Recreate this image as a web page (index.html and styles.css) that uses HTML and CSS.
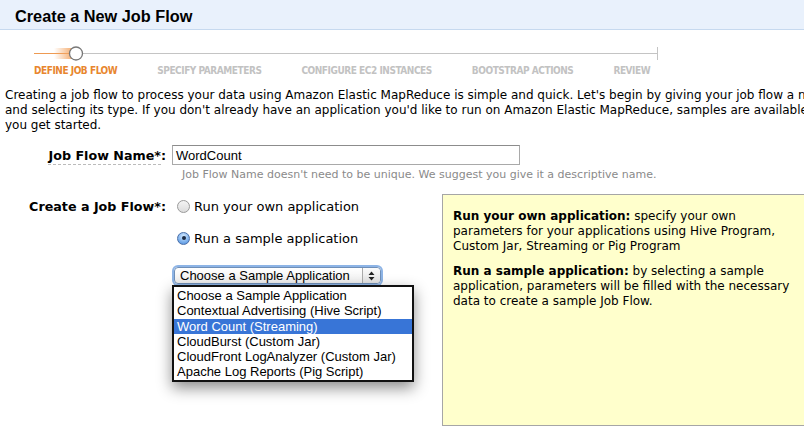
FILE: index.html
```html
<!DOCTYPE html>
<html>
<head>
<meta charset="utf-8">
<link rel="stylesheet" href="styles.css">
</head>
<body>
<div class="page">
  <div class="header"><h1>Create a New Job Flow</h1></div>

  <div class="steps">
    <svg class="track" width="630" height="16" viewBox="0 0 630 16">
      <defs>
        <linearGradient id="glow" x1="0" x2="1" y1="0" y2="0">
          <stop offset="0" stop-color="#f4a664" stop-opacity="0"/>
          <stop offset="1" stop-color="#f4a664" stop-opacity="0.9"/>
        </linearGradient>
      </defs>
      <line x1="0" y1="7.5" x2="36" y2="7.5" stroke="#ee9a52" stroke-width="1"/>
      <rect x="20" y="2" width="18" height="11" fill="url(#glow)"/>
      <line x1="48" y1="7.5" x2="623" y2="7.5" stroke="#c4c4c4" stroke-width="1"/>
      <line x1="623.5" y1="1" x2="623.5" y2="14" stroke="#c4c4c4" stroke-width="1"/>
      <circle cx="42" cy="7.5" r="6.5" fill="#fff" stroke="#777" stroke-width="1.3"/>
    </svg>
    <div class="step-labels">
      <span class="step active">DEFINE JOB FLOW</span>
      <span class="step">SPECIFY PARAMETERS</span>
      <span class="step">CONFIGURE EC2 INSTANCES</span>
      <span class="step">BOOTSTRAP ACTIONS</span>
      <span class="step">REVIEW</span>
    </div>
  </div>

  <p class="intro">Creating a job flow to process your data using Amazon Elastic MapReduce is simple and quick. Let's begin by giving your job flow a name<br>and selecting its type. If you don't already have an application you'd like to run on Amazon Elastic MapReduce, samples are available to help<br>you get started.</p>

  <div class="row name-row">
    <div class="label"><span class="dotted">Job Flow Name*</span>:</div>
    <div class="field">
      <div class="textbox">WordCount</div>
      <div class="hint">Job Flow Name doesn't need to be unique. We suggest you give it a descriptive name.</div>
    </div>
  </div>

  <div class="row type-row">
    <div class="label">Create a Job Flow*:</div>
    <div class="choices">
      <div class="radio-line"><span class="radio"></span>Run your own application</div>
      <div class="radio-line"><span class="radio checked"></span>Run a sample application</div>
      <div class="select-wrap">
        <div class="select">
          <span class="select-text">Choose a Sample Application</span>
          <span class="select-btn">
            <svg width="7" height="10" viewBox="0 0 7 10"><path d="M3.5 0.5 L6.5 4 H0.5 Z M3.5 9.5 L6.5 6 H0.5 Z" fill="#222"/></svg>
          </span>
        </div>
        <ul class="menu">
          <li>Choose a Sample Application</li>
          <li>Contextual Advertising (Hive Script)</li>
          <li class="sel">Word Count (Streaming)</li>
          <li>CloudBurst (Custom Jar)</li>
          <li>CloudFront LogAnalyzer (Custom Jar)</li>
          <li>Apache Log Reports (Pig Script)</li>
        </ul>
      </div>
    </div>
    <div class="infobox">
      <p><b>Run your own application:</b> specify your own<br>parameters for your applications using Hive Program,<br>Custom Jar, Streaming or Pig Program</p>
      <p><b>Run a sample application:</b> by selecting a sample<br>application, parameters will be filled with the necessary<br>data to create a sample Job Flow.</p>
    </div>
  </div>
</div>
</body>
</html>
```

FILE: styles.css
```css
html, body {
  margin: 0;
  padding: 0;
}
body {
  width: 804px;
  height: 434px;
  overflow: hidden;
  background: #fff;
  color: #000;
  font-family: "DejaVu Sans", Verdana, sans-serif;
  font-size: 12px;
}
.page {
  width: 1000px;
}
.header {
  height: 29px;
  background: #e9f1fc;
  border-bottom: 1px solid #c6d9ef;
}
.header h1 {
  margin: 0;
  padding-left: 15px;
  font-family: "Liberation Sans", Arial, sans-serif;
  font-size: 16.3px;
  font-weight: bold;
  line-height: 33px;
}
.steps {
  padding: 16px 0 0 34px;
}
.track {
  display: block;
}
.step-labels {
  display: flex;
  gap: 40px;
  margin-top: 2px;
}
.step {
  font-family: "DejaVu Sans Condensed", "DejaVu Sans", sans-serif;
  font-stretch: condensed;
  font-weight: bold;
  font-size: 10px;
  letter-spacing: -0.45px;
  color: #c2c2c2;
  line-height: 13px;
}
.step.active {
  color: #e8862e;
}
.intro {
  margin: 11px 0 0 5px;
  line-height: 15px;
  white-space: nowrap;
}
.row {
  display: flex;
}
.label {
  width: 166px;
  text-align: right;
  font-weight: bold;
  font-size: 12.7px;
  flex: none;
}
.name-row {
  margin-top: 12px;
}
.name-row .label {
  padding-top: 3px;
}
.dotted {
  border-bottom: 1px dashed #bbb;
  padding-bottom: 1px;
}
.field {
  padding-left: 6px;
}
.textbox {
  width: 343px;
  height: 18px;
  border: 1px solid #a9a9a9;
  border-top-color: #8c8c8c;
  font-family: "Liberation Sans", Arial, sans-serif;
  font-size: 13px;
  line-height: 19px;
  padding-left: 3px;
}
.hint {
  margin: 3px 0 0 10px;
  font-size: 11px;
  color: #8a8a8a;
  line-height: 14px;
}
.type-row {
  margin-top: 14px;
}
.type-row .label {
  padding-top: 3px;
}
.choices {
  width: 265px;
  flex: none;
  padding-left: 11px;
}
.radio-line {
  display: flex;
  align-items: center;
  font-size: 13px;
  height: 20px;
  margin-bottom: 12px;
}
.radio {
  width: 11px;
  height: 11px;
  border-radius: 50%;
  border: 1px solid #9a9a9a;
  background: linear-gradient(#f4f4f4, #dcdcdc);
  margin-right: 4px;
  box-sizing: content-box;
  position: relative;
}
.radio.checked {
  border-color: #4a6fa8;
  background: radial-gradient(circle at 50% 30%, #d6ebff, #6ea6e8 70%, #4a86d4);
}
.radio.checked::after {
  content: "";
  position: absolute;
  left: 3.5px;
  top: 3.5px;
  width: 4px;
  height: 4px;
  border-radius: 50%;
  background: #1b2b44;
}
.select-wrap {
  position: relative;
  margin-top: 19px;
}
.select {
  width: 205px;
  height: 15px;
  margin-left: -3px;
  border: 1px solid #6f8fb8;
  border-radius: 4px;
  box-shadow: 0 0 0 2px #8db4e6;
  background: linear-gradient(#ffffff, #eeeeee);
  display: flex;
  align-items: center;
  font-family: "Liberation Sans", Arial, sans-serif;
  font-size: 13px;
}
.select-text {
  flex: 1;
  padding-left: 5px;
  line-height: 15px;
}
.select-btn {
  width: 17px;
  height: 15px;
  border-left: 1px solid #aaa;
  display: flex;
  align-items: center;
  justify-content: center;
  background: linear-gradient(#fbfbfb, #e2e2e2);
  border-radius: 0 4px 4px 0;
}
.menu {
  position: absolute;
  left: -5px;
  top: 18px;
  width: 238px;
  margin: 0;
  padding: 1px 0 0;
  list-style: none;
  background: #fff;
  border: 2px solid #111;
  box-shadow: 0 6px 14px rgba(0, 0, 0, 0.45);
  font-family: "Liberation Sans", Arial, sans-serif;
  font-size: 13px;
  z-index: 2;
}
.menu li {
  height: 15.3px;
  line-height: 15px;
  padding-left: 3px;
  white-space: nowrap;
}
.menu li.sel {
  background: #3875d7;
  color: #fff;
}
.infobox {
  width: 400px;
  height: 232px;
  margin-top: -2px;
  background: #ffffcc;
  border: 1px solid #a6a6a6;
  padding: 14px 0 0 10px;
  box-sizing: border-box;
  line-height: 15px;
}
.infobox p {
  margin: 0 0 10px;
}
```
